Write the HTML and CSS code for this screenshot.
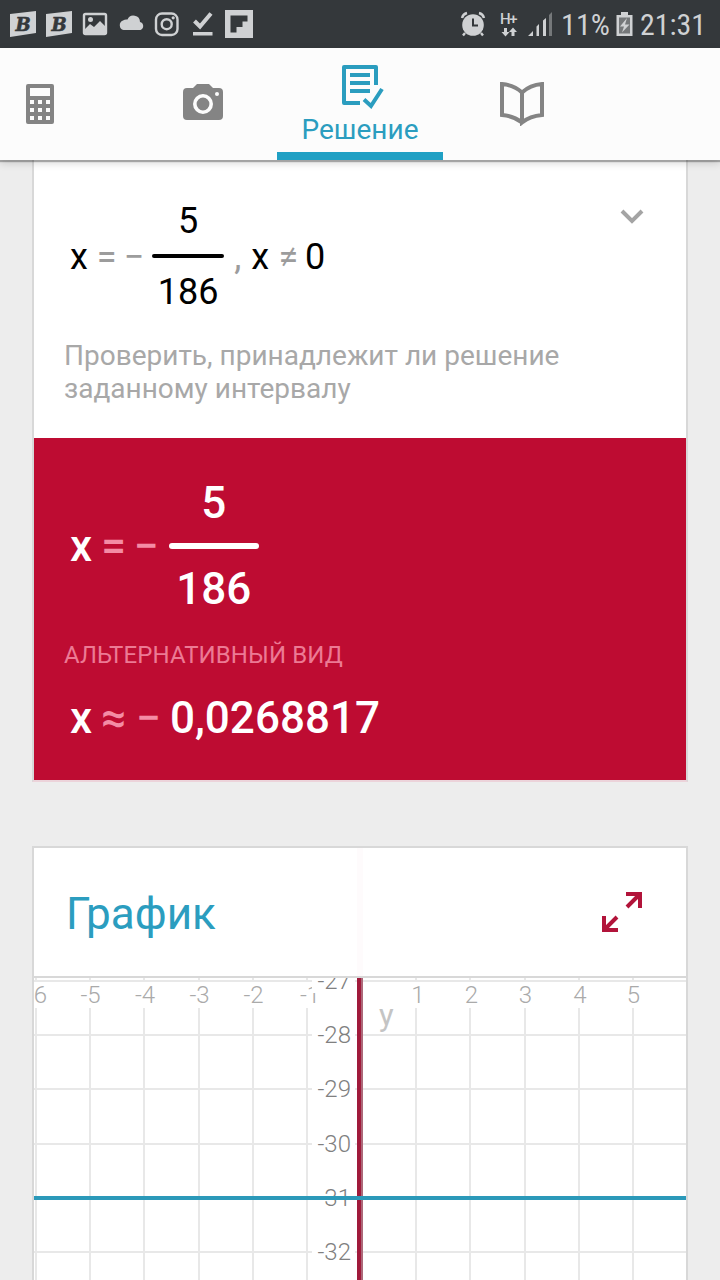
FILE: index.html
```html
<!DOCTYPE html>
<html lang="ru">
<head>
    <meta charset="UTF-8">
    <meta name="viewport" content="width=device-width, initial-scale=1.0">
    <title>Решение</title>
    <link rel="stylesheet" href="styles.css">
</head>
<body>
    <div class="status-bar">
        <div class="notifications">
            <svg width="36" height="48"><path class="fill" d="M5 14L31 11V33L5 37Z"/><text class="logo-b" x="10.5" y="30.5">B</text></svg>
            <svg width="36" height="48"><path class="fill" d="M5 14L31 11V33L5 37Z"/><text class="logo-b" x="10.5" y="30.5">B</text></svg>
            <svg width="36" height="48">
                <rect class="line" x="7" y="14" width="22" height="20" rx="1.5"/>
                <circle class="fill" cx="13.5" cy="19.5" r="2.5"/>
                <path class="fill" d="M8 29L13 24L17 27L23 21L29 27V34H8Z"/>
            </svg>
            <svg width="36" height="48"><path class="fill" d="M10 30.500a5 5 0 0 1-.5-9.500a6 6 0 0 1 4.500-1a6.500 6.500 0 0 1 12.500 2.500a4.200 4.200 0 0 1 .5 8z" transform="translate(.5 -.5)"/></svg>
            <svg width="36" height="48">
                <rect class="line" x="7" y="13.500" width="21.500" height="21.500" rx="6"/>
                <circle class="line" cx="17.700" cy="24.200" r="5"/>
                <circle class="fill" cx="24.200" cy="17.800" r="1.600"/>
            </svg>
            <svg width="36" height="48">
                <path class="check" d="M9.500 21L15 26.500L26 13.500"/>
                <rect class="fill" x="8" y="32" width="19.500" height="3.500"/>
            </svg>
            <svg width="36" height="48">
                <rect class="fill" x="4" y="10" width="28" height="28"/>
                <path class="hole" d="M9.500 15.500H26.500V21.500H21.500V27H15.500V32.500H9.500Z"/>
            </svg>
        </div>
        <div class="system">
            <svg width="26" height="48">
                <circle class="fill" cx="13" cy="25" r="10.800"/>
                <path class="line" d="M2 18Q3 14 7 13M24 18Q23 14 19 13M5 33L3 35.500M21 33L23 35.500"/>
                <path class="dark-line" d="M13 18.500V25.500H18"/>
            </svg>
            <svg class="network" width="20" height="48">
                <text class="network-type" x="0" y="24" textLength="17.500">H+</text>
                <path class="fill" d="M4 28H7V32H9.500L5.500 36.500L1.500 32H4ZM11.500 36V32H9L13 27.500L17 32H14.500V36Z"/>
            </svg>
            <svg class="signal" width="26" height="48">
                <path class="fill" d="M0 36L5 31V36ZM8.500 36V26.500L11 24V36ZM15 36V20.500L18 18V36Z"/>
                <path class="faded" d="M21 36V15L24 12V36Z"/>
            </svg>
            <svg class="percent" width="48" height="48"><text class="clock" x="-1" y="35" textLength="49" lengthAdjust="spacingAndGlyphs">11%</text></svg>
            <svg class="battery" width="18" height="48">
                <path class="fill" d="M5 12H12V15H16.500V36H0.500V15H5Z"/>
                <rect class="cell" x="3" y="17.500" width="11" height="16"/>
                <path class="fill" d="M11 18L4 26.500H8L6 32.500L13.500 24.500H9Z"/>
            </svg>
            <svg class="time" width="66" height="48"><text class="clock" x="0" y="35" textLength="66" lengthAdjust="spacingAndGlyphs">21:31</text></svg>
        </div>
    </div>

    <div class="tabs">
        <div class="tab tab-calc">
            <svg width="28" height="40" fill="#848484">
                <path fill-rule="evenodd" d="M2 0H26Q28 0 28 2V38Q28 40 26 40H2Q0 40 0 38V2Q0 0 2 0ZM4 4V12H24V4ZM4 16V20H8V16ZM12 16V20H16V16ZM20 16V20H24V16ZM4 24V28H8V24ZM12 24V28H16V24ZM20 24V28H24V24ZM4 32V36H8V32ZM12 32V36H16V32ZM20 32V36H24V32Z"/>
            </svg>
        </div>
        <div class="tab tab-camera">
            <svg width="40" height="36" fill="#848484">
                <path d="M4 4H10L14 0H26L30 4H36Q40 4 40 8V32Q40 36 36 36H4Q0 36 0 32V8Q0 4 4 4Z"/>
                <circle cx="20" cy="20" r="8.200" stroke="#fcfcfc" stroke-width="3.600"/>
                <circle cx="34" cy="10" r="2" fill="#fcfcfc"/>
            </svg>
        </div>
        <div class="tab tab-solution">
            <svg width="44" height="46" fill="none" stroke="#2b9dbf" stroke-width="4">
                <path d="M34 20V2H2V38H18" stroke-linejoin="round"/>
                <path d="M8 10H28M8 18H28M8 26H28"/>
                <path d="M22 34.500L29 41L40 24"/>
            </svg>
            <span>Решение</span>
        </div>
        <div class="tab tab-book">
            <svg width="44" height="44" fill="none" stroke="#848484" stroke-width="4">
                <path d="M22 40.500Q14 34 2 33V2Q14 3 22 10.500Q30 3 42 2V33Q30 34 22 40.500V10"/>
            </svg>
        </div>
    </div>

    <div class="card solution-card">
        <div class="step">
            <div class="step-top">
                <div class="formula">
                    <span>x</span>
                    <span class="op eq">=</span>
                    <span class="op minus">−</span>
                    <span class="fraction"><span>5</span><span class="bar"></span><span>186</span></span>
                    <span class="op comma">,</span>
                    <span class="second-x">x</span>
                    <span class="op neq">≠</span>
                    <span class="zero">0</span>
                </div>
                <svg class="chevron" width="24" height="16"><path d="M2 2L12 12L22 2"/></svg>
            </div>
            <p class="description">Проверить, принадлежит ли решение<br>заданному интервалу</p>
        </div>
        <div class="result">
            <div class="formula">
                <span>x</span>
                <span class="op eq">=</span>
                <span class="op minus">−</span>
                <span class="fraction"><span>5</span><span class="bar"></span><span>186</span></span>
            </div>
            <p class="alt-label">АЛЬТЕРНАТИВНЫЙ ВИД</p>
            <div class="formula">
                <span>x</span>
                <span class="op approx">≈</span>
                <span class="op minus">−</span>
                <span class="decimal">0,0268817</span>
            </div>
        </div>
    </div>

    <div class="card graph-card">
        <div class="graph-header">
            <h2>График</h2>
            <svg width="40" height="40" fill="none" stroke="#b2143a" stroke-width="4">
                <path d="M24 2H38V16M37 3L25 15M16 38H2V24M3 37L15 25"/>
            </svg>
        </div>
        <svg class="graph" width="652" height="302" viewBox="0 0 652 302">
            <g class="grid">
                <path d="M2 0V302M56 0V302M110 0V302M165 0V302M219 0V302M273 0V302M382 0V302M436 0V302M491 0V302M545 0V302M599 0V302"/>
                <path d="M0 3H652M0 57H652M0 111H652M0 166H652M0 274H652"/>
            </g>
            <!-- gaps in the grid behind the labels -->
            <path class="gap" d="M0 4H652V30H0ZM278 44H321V70H278ZM278 98H321V124H278ZM278 153H321V179H278ZM278 261H321V287H278Z"/>
            <g class="x-labels">
                <text x="6.500" y="25">6</text>
                <text x="56.500" y="25">-5</text>
                <text x="111" y="25">-4</text>
                <text x="165.500" y="25">-3</text>
                <text x="219.500" y="25">-2</text>
                <text x="276" y="25">-1</text>
                <text x="384" y="25">1</text>
                <text x="437.500" y="25">2</text>
                <text x="491.500" y="25">3</text>
                <text x="546" y="25">4</text>
                <text x="599.500" y="25">5</text>
            </g>
            <path class="gap" d="M278 0H321V15H278Z"/>
            <g class="y-labels">
                <text x="317" y="11">-27</text>
                <text x="317" y="65">-28</text>
                <text x="317" y="119">-29</text>
                <text x="317" y="174">-30</text>
                <text x="317" y="228">-31</text>
                <text x="317" y="282">-32</text>
            </g>
            <text class="axis-name" x="345" y="48">y</text>
            <rect x="323" y="0" width="4" height="302" fill="#a01a3b"/>
            <rect x="327" y="0" width="2" height="302" fill="#ad6879"/>
            <rect x="0" y="218" width="652" height="4" fill="#2b99b9"/>
        </svg>
    </div>
</body>
</html>
```
FILE: styles.css
```css
body {
    margin: 0;
    width: 720px;
    height: 1280px;
    overflow: hidden;
    background-color: #ededed;
    font-family: Roboto, "Liberation Sans", sans-serif;
}

svg {
    display: block;
    flex: none;
}

p, h2 {
    margin: 0;
    font-weight: 400;
}

/* Status bar */
.status-bar {
    display: flex;
    justify-content: space-between;
    height: 48px;
    padding: 0 14px 0 5px;
    background-color: #34383b;
}

.notifications, .system {
    display: flex;
}

.fill {
    fill: #cfd1d3;
}

.line {
    fill: none;
    stroke: #cfd1d3;
    stroke-width: 2.4;
}

.dark-line {
    fill: none;
    stroke: #34383b;
    stroke-width: 2;
}

.check {
    fill: none;
    stroke: #cfd1d3;
    stroke-width: 4;
}

.hole {
    fill: #34383b;
}

.faded, .cell {
    fill: #75787a;
}

.logo-b {
    font: italic bold 18px "DejaVu Serif", serif;
    fill: #34383b;
    stroke: #34383b;
    stroke-width: 0.6;
}

.network-type {
    font: 500 15px Roboto, sans-serif;
    fill: #cfd1d3;
}

.clock {
    font: 30px "Roboto Condensed", Roboto, sans-serif;
    fill: #cfd1d3;
}

.network {
    margin-left: 14px;
}

.signal {
    margin-left: 8px;
}

.percent {
    margin-left: 8px;
}

.battery {
    margin-left: 6px;
}

.time {
    margin-left: 6px;
}

/* Tabs */
.tabs {
    position: relative;
    z-index: 1;
    display: flex;
    height: 112px;
    background-color: #fcfcfc;
    box-shadow: 0 2px 1px rgba(0, 0, 0, 0.28), 0 3px 8px rgba(0, 0, 0, 0.16);
}

.tab {
    box-sizing: border-box;
    display: flex;
    flex-direction: column;
    align-items: center;
    flex: none;
}

.tab-calc {
    width: 178px;
    margin-left: -49px;
    padding-top: 36px;
}

.tab-camera {
    width: 148px;
    padding-top: 36px;
}

.tab-solution {
    width: 166px;
    padding: 17px 0 0;
    border-bottom: 8px solid #20a0c4;
    color: #2b9dbf;
    font-size: 28px;
    line-height: 34px;
}

.tab-solution svg {
    margin-left: 8px;
}

.tab-solution span {
    margin-top: 2px;
}

.tab-book {
    width: 158px;
    padding-top: 34px;
}

/* Cards */
.card {
    width: 652px;
    margin: 0 32px;
    border: 2px solid #d8d8d8;
    background-color: #fff;
}

.solution-card {
    border-top: 0;
    border-bottom-color: #ecd3da;
}

.step {
    box-sizing: border-box;
    height: 278px;
    padding: 43px 30px 0;
}

.step-top {
    display: flex;
    justify-content: space-between;
}

.formula {
    display: flex;
    align-items: center;
    padding-left: 6px;
    font-size: 36px;
    line-height: 36px;
    color: #000;
}

.op {
    color: #9c9c9c;
}

.eq, .neq, .approx {
    margin-left: 9px;
}

.minus {
    margin-left: 7px;
}

.fraction {
    display: flex;
    flex-direction: column;
    align-items: center;
    width: 72px;
    margin-left: 8px;
}

.bar {
    width: 100%;
    height: 4px;
    margin: 15px 0 16px;
    border-radius: 2px;
    background-color: #000;
}

.comma {
    margin-left: 10px;
}

.second-x {
    margin-left: 10px;
}

.zero {
    margin-left: 7px;
}

.chevron {
    margin: 6px 12px 0 0;
    fill: none;
    stroke: #a4a4a4;
    stroke-width: 4;
}

.description {
    margin-top: 29px;
    font-size: 28px;
    line-height: 33px;
    color: #a8a8a8;
}

.result {
    box-sizing: border-box;
    height: 342px;
    padding: 43px 30px 0;
    background-color: #be0c32;
}

.result .formula {
    font-size: 44px;
    line-height: 44px;
    font-weight: 500;
    color: #fff;
}

.result .op {
    color: #f48ca5;
}

.result .minus {
    margin-left: 8px;
}

.result .approx + .minus {
    margin-left: 10px;
}

.result .fraction {
    width: 90px;
    margin-left: 10px;
}

.result .decimal {
    margin-left: 9px;
}

.result .bar {
    height: 6px;
    margin: 18px 0;
    border-radius: 3px;
    background-color: #fff;
}

.alt-label {
    margin: 30px 0 27px;
    font-size: 24px;
    line-height: 28px;
    letter-spacing: 0.1px;
    color: #ec7a94;
}

/* Graph */
.graph-card {
    margin-top: 64px;
}

.graph-header {
    box-sizing: border-box;
    display: flex;
    justify-content: space-between;
    height: 130px;
    padding: 44px 44px 0 32px;
    border-bottom: 2px solid #d8d8d8;
    /* the axis shows faintly through the header */
    background: linear-gradient(#fefbfc, #fefbfc) 323px 0 / 6px 100% no-repeat;
}

.graph-header h2 {
    font-size: 44px;
    line-height: 44px;
    color: #2b9dbf;
}

.grid path {
    fill: none;
    stroke: #e8e8e8;
    stroke-width: 2;
}

.gap {
    fill: #fff;
}

.x-labels, .y-labels {
    font-size: 24px;
    font-weight: 300;
}

.x-labels {
    fill: #aaa;
    text-anchor: middle;
}

.y-labels {
    fill: #808080;
    text-anchor: end;
}

.axis-name {
    font-size: 31px;
    fill: #c4c4c4;
}
```
